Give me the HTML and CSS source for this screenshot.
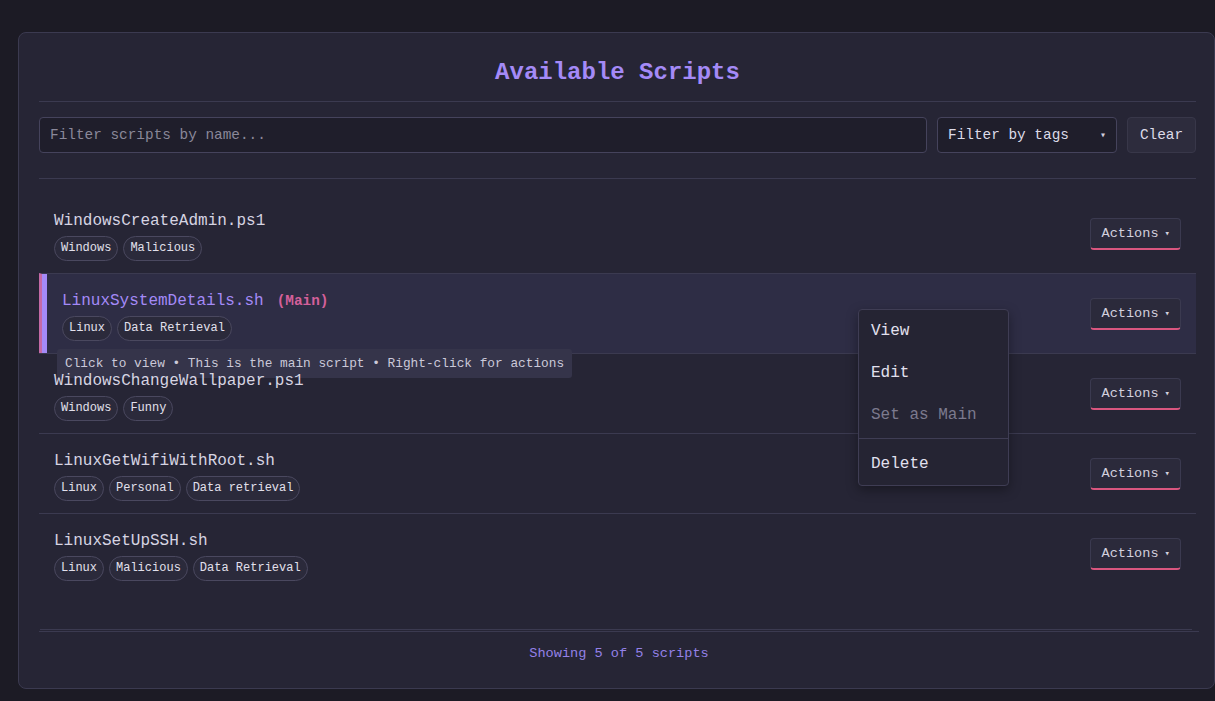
FILE: index.html
```html
<!DOCTYPE html>
<html lang="en">
<head>
<meta charset="utf-8">
<title>Available Scripts</title>
<link rel="stylesheet" href="styles.css">
</head>
<body>
<div class="panel">
  <h1 class="title">Available Scripts</h1>
  <div class="toolbar">
    <input class="search" type="text" placeholder="Filter scripts by name...">
    <div class="select"><span>Filter by tags</span><span class="caret">▾</span></div>
    <button class="clear">Clear</button>
  </div>
  <div class="divider"></div>
  <div class="list">
    <div class="row">
      <div class="info">
        <div class="name">WindowsCreateAdmin.ps1</div>
        <div class="tags"><span class="tag">Windows</span><span class="tag">Malicious</span></div>
      </div>
      <button class="actions">Actions <span class="caret-sm">▾</span></button>
    </div>
    <div class="row row-main">
      <div class="info">
        <div class="name name-main">LinuxSystemDetails.sh<span class="main-badge">(Main)</span></div>
        <div class="tags"><span class="tag">Linux</span><span class="tag">Data Retrieval</span></div>
      </div>
      <button class="actions">Actions <span class="caret-sm">▾</span></button>
      <div class="tooltip">Click to view • This is the main script • Right-click for actions</div>
    </div>
    <div class="row">
      <div class="info">
        <div class="name">WindowsChangeWallpaper.ps1</div>
        <div class="tags"><span class="tag">Windows</span><span class="tag">Funny</span></div>
      </div>
      <button class="actions">Actions <span class="caret-sm">▾</span></button>
    </div>
    <div class="row">
      <div class="info">
        <div class="name">LinuxGetWifiWithRoot.sh</div>
        <div class="tags"><span class="tag">Linux</span><span class="tag">Personal</span><span class="tag">Data retrieval</span></div>
      </div>
      <button class="actions">Actions <span class="caret-sm">▾</span></button>
    </div>
    <div class="row">
      <div class="info">
        <div class="name">LinuxSetUpSSH.sh</div>
        <div class="tags"><span class="tag">Linux</span><span class="tag">Malicious</span><span class="tag">Data Retrieval</span></div>
      </div>
      <button class="actions">Actions <span class="caret-sm">▾</span></button>
    </div>
    <div class="menu">
      <div class="menu-item">View</div>
      <div class="menu-item">Edit</div>
      <div class="menu-item disabled">Set as Main</div>
      <div class="menu-sep"></div>
      <div class="menu-item">Delete</div>
    </div>
  </div>
  <div class="footer">Showing 5 of 5 scripts</div>
</div>
</body>
</html>
```

FILE: styles.css
```css
* { box-sizing: border-box; }
html, body {
  margin: 0;
  padding: 0;
  background: #1c1b25;
  font-family: "Liberation Mono", "DejaVu Sans Mono", monospace;
  color: #d6d4e2;
}
.panel {
  margin: 32px 0 0 18px;
  width: 1197px;
  background: #262535;
  border: 1px solid #3b3a50;
  border-radius: 8px;
  padding: 20px 18px 20px 20px;
}
.title {
  margin: 0;
  padding-top: 2px;
  padding-bottom: 10px;
  border-bottom: 1px solid #3b3a50;
  text-align: center;
  font-size: 24px;
  line-height: 36px;
  font-weight: bold;
  color: #a48af7;
}
.toolbar {
  display: flex;
  gap: 10px;
  margin-top: 15px;
  height: 36px;
}
.search {
  flex: 1;
  height: 36px;
  background: #1f1e2b;
  border: 1px solid #45435c;
  border-radius: 4px;
  padding: 0 10px;
  font-family: inherit;
  font-size: 14.4px;
  color: #d6d4e2;
  outline: none;
}
.search::placeholder { color: #8a8899; }
.select {
  width: 180px;
  height: 36px;
  background: #1f1e2b;
  border: 1px solid #45435c;
  border-radius: 4px;
  padding: 0 10px;
  display: flex;
  align-items: center;
  justify-content: space-between;
  font-size: 14.4px;
  color: #dddbe8;
}
.caret { font-size: 10px; color: #cfcddc; }
.clear {
  width: 69px;
  height: 36px;
  background: #2d2c3d;
  border: 1px solid #383749;
  border-radius: 4px;
  font-family: inherit;
  font-size: 14.4px;
  color: #dddbe8;
  padding: 0;
}
.divider {
  margin-top: 25px;
  height: 1px;
  background: #3b3a50;
}
.list {
  position: relative;
  padding: 15px 0 36px;
  margin: 0 4px 1px 1px;
  border-bottom: 1px solid #3b3a50;
}
.row {
  position: relative;
  display: flex;
  align-items: center;
  justify-content: space-between;
  padding: 17px 15px 12px 15px;
  margin: 0 -4px 0 -1px;
  border-top: 1px solid #3b3a50;
}
.row:first-child { border-top: none; }
.row-main {
  background: #2e2d45;
  border-left: 3px solid #c56aa6;
  box-shadow: inset 5px 0 0 #a48af7;
  padding-left: 20px;
}
.info { display: flex; flex-direction: column; gap: 5px; }
.name {
  position: relative;
  z-index: 2;
  font-size: 16px;
  line-height: 20px;
  color: #d6d4e2;
}
.name-main { color: #a48af7; }
.main-badge {
  margin-left: 13px;
  font-size: 14.4px;
  font-weight: bold;
  color: #d4609a;
}
.tags { display: flex; gap: 5px; }
.tag {
  height: 25px;
  line-height: 23px;
  padding: 0 6px;
  border: 1px solid #4a485f;
  border-radius: 13px;
  background: #2b2a3b;
  font-size: 12px;
  color: #e2e0ec;
}
.actions {
  display: flex;
  align-items: center;
  gap: 6px;
  height: 32px;
  margin-bottom: 4px;
  padding: 0 10px 0 10px;
  background: #2b2a3b;
  border: 1px solid #3b3a50;
  border-bottom: 2px solid #d9567f;
  border-radius: 4px;
  font-family: inherit;
  font-size: 13.6px;
  color: #d2d0de;
}
.caret-sm { font-size: 9px; }
.tooltip {
  position: absolute;
  z-index: 1;
  left: 15px;
  top: 75px;
  height: 29px;
  padding: 0 8px;
  line-height: 29px;
  background: #35344a;
  border-radius: 3px;
  font-size: 12.8px;
  color: #cbc9d9;
  white-space: nowrap;
}
.menu {
  position: absolute;
  z-index: 5;
  left: 818px;
  top: 130px;
  width: 151px;
  background: #252433;
  border: 1px solid #3f3d54;
  border-radius: 4px;
  box-shadow: 0 4px 12px rgba(0, 0, 0, 0.35);
}
.menu-item {
  height: 42px;
  line-height: 42px;
  padding: 0 12px;
  font-size: 16px;
  color: #e2e0ee;
}
.menu-item.disabled { color: #7c7a8e; }
.menu-sep { height: 1px; margin: 2px 0 4px; background: #3f3d54; }
.footer {
  border-top: 1px solid #3b3a50;
  padding: 13px 0 5px;
  margin-right: -3px;
  text-align: center;
  font-size: 13.6px;
  line-height: 18px;
  color: #9481e8;
}
```
